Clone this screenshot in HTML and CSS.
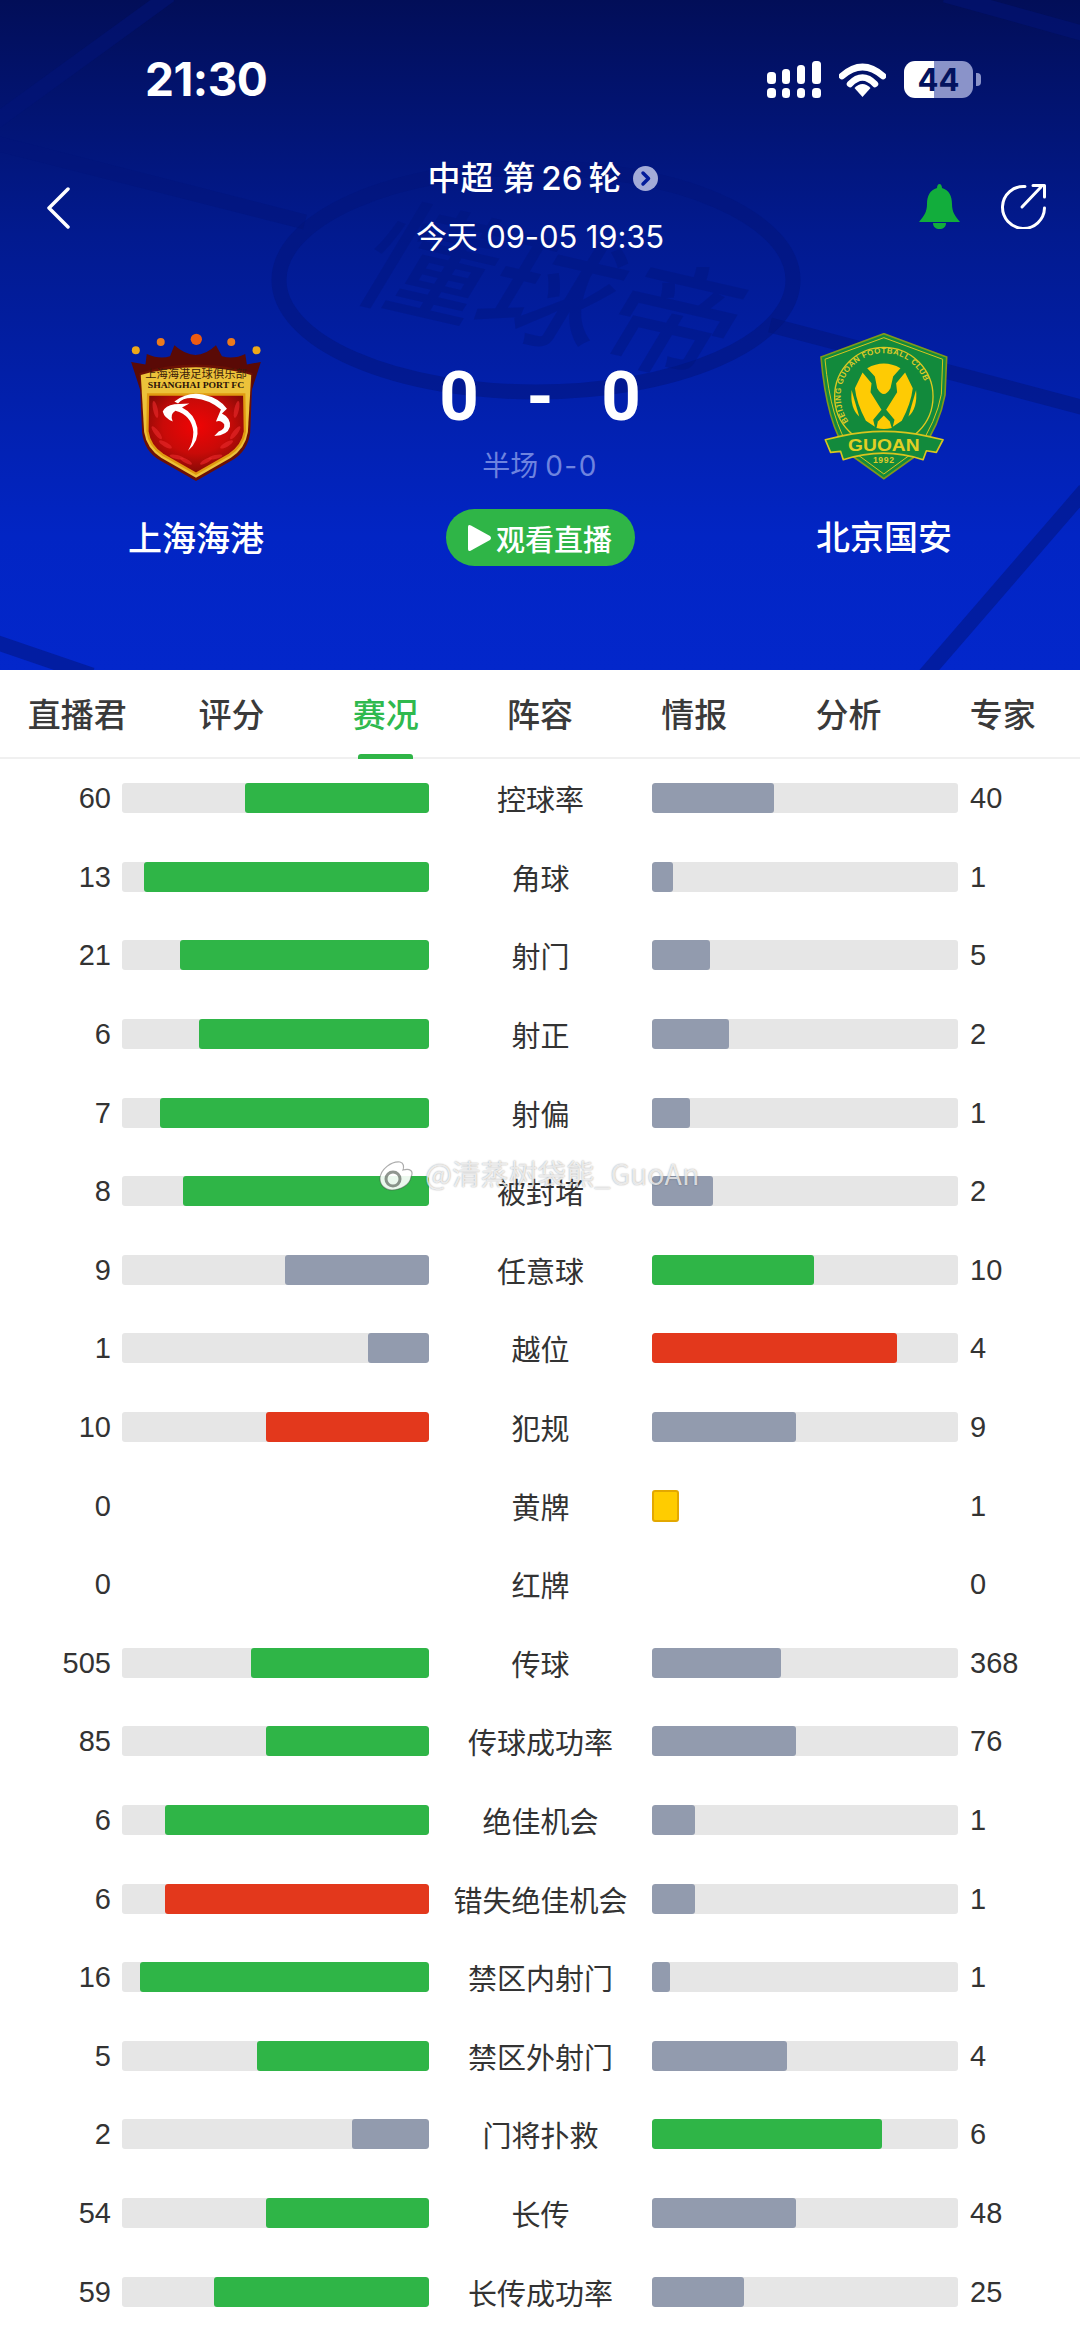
FILE: index.html
```html
<!DOCTYPE html>
<html lang="zh">
<head>
<meta charset="utf-8">
<title>上海海港 vs 北京国安</title>
<link rel="stylesheet" href="styles.css">
</head>
<body>
<header class="hero">
  <svg class="pitch" viewBox="0 0 1080 670" aria-hidden="true">
    <path class="pitch-line" d="M170 -5 L-5 122"/>
    <path class="pitch-line" d="M945 -5 L1085 34"/>
    <path class="pitch-line" d="M-5 143 L305 222"/>
    <path class="pitch-line" d="M770 325 L1085 408"/>
    <path class="pitch-line" d="M-5 642 L92 675"/>
    <path class="pitch-line" d="M1085 490 L925 675"/>
    <ellipse class="pitch-line" cx="536" cy="280" rx="257" ry="112"/>
    <text class="pitch-word" transform="translate(345 292) rotate(13) skewX(-18)">懂球帝</text>
  </svg>

  <div class="status">
    <span class="clock">21:30</span>
    <div class="status-icons">
      <svg class="signal" viewBox="0 0 54 37">
        <rect x="0" y="27" width="9" height="10" rx="3.5"/><rect x="15" y="27" width="8" height="10" rx="3.5"/><rect x="30" y="27" width="8" height="10" rx="3.5"/><rect x="45" y="27" width="9" height="10" rx="3.5"/>
        <rect x="0" y="11" width="9" height="12" rx="3.5"/><rect x="15" y="8" width="8" height="15" rx="3.5"/><rect x="30" y="4" width="8" height="19" rx="3.5"/><rect x="45" y="0" width="9" height="23" rx="3.5"/>
      </svg>
      <svg class="wifi" viewBox="0 0 47 34">
        <path class="wifi-arc" d="M3 13 Q23.500 -5 44 13"/>
        <path class="wifi-arc" d="M11 21 Q23.500 8 36 21"/>
        <path class="wifi-dot" d="M15.500 25 Q23.500 17 31.500 25 L23.500 34 Z"/>
      </svg>
      <div class="battery"><span class="battery-level">44</span></div>
    </div>
  </div>

  <div class="nav">
    <svg class="back" viewBox="0 0 24 42"><path d="M22 2 L3 21 L22 40"/></svg>
    <div class="nav-title">
      <div class="round"><span>中超 第<span class="round-num">26</span>轮</span><svg class="round-more" viewBox="0 0 25 25"><circle cx="12.500" cy="12.500" r="12.500"/><path d="M10 7 L15.500 12.500 L10 18"/></svg></div>
      <div class="date">今天 09-05 19:35</div>
    </div>
    <div class="nav-actions">
      <svg class="bell" viewBox="0 0 41 45"><path d="M20.500 0 C22 0 23 2 23 4 C30 6 33 12 33 20 C33 28 36 32 41 38 L0 38 C5 32 8 28 8 20 C8 12 11 6 18 4 C18 2 19 0 20.500 0 Z"/><path d="M14 39 L27 39 C27 43 24 45 20.500 45 C17 45 14 43 14 39 Z"/></svg>
      <svg class="share" viewBox="0 0 45 45"><path d="M24 2.500 A21 21 0 1 0 43.500 24"/><path d="M21 23 L40 3"/><path d="M32 1.500 L43.500 1.500 L43.500 13"/></svg>
    </div>
  </div>

  <div class="match">
    <div class="team">
      <svg class="crest" viewBox="215 70 390 445">
        <defs>
          <radialGradient id="redfill" cx="50%" cy="40%" r="62%"><stop offset="0" stop-color="#f00404"/><stop offset=".55" stop-color="#c90a08"/><stop offset="1" stop-color="#7c0b06"/></radialGradient>
        </defs>
        <circle class="dot-a" cx="229" cy="122" r="12"/><circle class="dot-b" cx="304" cy="97" r="12"/><circle class="dot-c" cx="411" cy="89" r="17"/><circle class="dot-b" cx="516" cy="97" r="12"/><circle class="dot-a" cx="592" cy="122" r="12"/>
        <path class="crown" d="M215 157 L258 165 L262 133 Q300 150 332 140 L345 107 Q410 165 470 107 L488 140 Q525 150 558 133 L563 165 L605 157 L575 250 L245 250 Z"/>
        <path class="shield-edge" d="M240 190 Q410 140 580 190 L573 370 Q565 425 520 452 L410 515 L300 452 Q255 425 248 370 Z"/>
        <path class="shield-gold" d="M244 196 Q410 150 576 196 L566 368 Q558 418 515 445 L410 505 L305 445 Q262 418 254 368 Z"/>
        <path class="shield-red" d="M266 255 L555 255 L557 366 Q550 410 510 436 L410 493 L310 436 Q270 410 264 366 Z"/>
        <g class="wings">
          <ellipse cx="288" cy="300" rx="7" ry="26" transform="rotate(-12 288 300)"/><ellipse cx="292" cy="370" rx="7" ry="24" transform="rotate(-38 292 370)"/><ellipse cx="318" cy="405" rx="7" ry="22" transform="rotate(-60 318 405)"/><ellipse cx="352" cy="443" rx="6" ry="22" transform="rotate(-78 352 443)"/><ellipse cx="380" cy="455" rx="6" ry="20" transform="rotate(-62 380 455)"/>
          <ellipse cx="532" cy="300" rx="7" ry="26" transform="rotate(12 532 300)"/><ellipse cx="528" cy="370" rx="7" ry="24" transform="rotate(38 528 370)"/><ellipse cx="502" cy="405" rx="7" ry="22" transform="rotate(60 502 405)"/><ellipse cx="468" cy="443" rx="6" ry="22" transform="rotate(78 468 443)"/><ellipse cx="440" cy="455" rx="6" ry="20" transform="rotate(62 440 455)"/>
        </g>
        <path class="eagle" d="M345 276 Q385 246 430 255 Q480 265 503 298 L488 312 Q515 325 512 352 Q505 378 465 380 L478 366 Q497 360 495 345 Q486 330 470 336 L485 300 Q450 270 405 266 Q372 263 356 282 Z"/>
        <path class="eagle" d="M390 282 L345 284 Q318 288 310 306 Q315 326 340 336 Q330 316 348 304 Q398 318 402 368 Q402 398 386 424 Q420 396 414 355 Q405 312 368 294 Z"/>
        <text class="crest-cn" x="410" y="205" textLength="305" lengthAdjust="spacingAndGlyphs">上海海港足球俱乐部</text>
        <text class="crest-en" x="410" y="236" textLength="290" lengthAdjust="spacingAndGlyphs">SHANGHAI PORT FC</text>
      </svg>
      <div class="team-name">上海海港</div>
    </div>

    <div class="score-box">
      <div class="score"><span>0</span><span class="dash">-</span><span>0</span></div>
      <div class="half">半场<span class="half-num">0-0</span></div>
      <div class="watch"><svg class="play" viewBox="0 0 23 26"><path d="M0 2 Q0 -1 3 .5 L22 11 Q24 13 22 15 L3 25.500 Q0 27 0 24 Z"/></svg>观看直播</div>
    </div>

    <div class="team">
      <svg class="crest crest-guoan" viewBox="180 75 385 440">
        <defs><path id="ringtext" d="M266 340 A130 130 0 1 1 478 340"/></defs>
        <path class="ga-shield" d="M372 76 L561 146 L556 260 Q540 350 480 435 L372 512 L265 435 Q200 350 183 146 Z"/>
        <path class="ga-inner" d="M372 88 L549 153 L545 258 Q530 340 472 425 L372 498 L273 425 Q212 340 195 153 Z"/>
        <circle class="ga-ring" cx="372" cy="265" r="148"/>
        <path class="ga-ball" d="M322 180 Q372 152 422 180 L400 205 L392 240 Q372 275 352 240 L345 205 Z"/>
        <path class="ga-ball" d="M308 193 L335 225 L332 252 L365 305 L340 335 L345 356 L318 338 Q290 285 285 240 Z"/>
        <path class="ga-ball" d="M436 193 L409 225 L412 252 L379 305 L404 335 L399 356 L426 338 Q454 285 459 240 Z"/>
        <path class="ga-ball" d="M275 245 L298 325 Q270 300 275 245 Z"/>
        <path class="ga-ball" d="M469 245 L446 325 Q474 300 469 245 Z"/>
        <path class="ga-ball" d="M372 322 L390 340 L396 360 Q372 366 350 360 L354 340 Z"/>
        <text class="ga-ringtext"><textPath href="#ringtext">BEIJING GUOAN FOOTBALL CLUB</textPath></text>
        <path class="ga-ribbon" d="M196 395 L240 385 Q372 355 505 385 L550 395 L530 433 L500 428 L490 455 Q372 415 250 455 L242 430 L212 433 Z"/>
        <text class="ga-name" x="372" y="428" textLength="215" lengthAdjust="spacingAndGlyphs">GUOAN</text>
        <text class="ga-year" x="372" y="466">1992</text>
      </svg>
      <div class="team-name">北京国安</div>
    </div>
  </div>
</header>

<nav class="tabs">
  <span class="tab">直播君</span>
  <span class="tab">评分</span>
  <span class="tab active">赛况</span>
  <span class="tab">阵容</span>
  <span class="tab">情报</span>
  <span class="tab">分析</span>
  <span class="tab">专家</span>
</nav>

<main class="stats">
  <div class="row"><span class="val-l">60</span><div class="bar bar-l"><i class="fill win" style="width:60%"></i></div><span class="label">控球率</span><div class="bar"><i class="fill lose" style="width:40%"></i></div><span class="val-r">40</span></div>
  <div class="row"><span class="val-l">13</span><div class="bar bar-l"><i class="fill win" style="width:93%"></i></div><span class="label">角球</span><div class="bar"><i class="fill lose" style="width:7%"></i></div><span class="val-r">1</span></div>
  <div class="row"><span class="val-l">21</span><div class="bar bar-l"><i class="fill win" style="width:81%"></i></div><span class="label">射门</span><div class="bar"><i class="fill lose" style="width:19%"></i></div><span class="val-r">5</span></div>
  <div class="row"><span class="val-l">6</span><div class="bar bar-l"><i class="fill win" style="width:75%"></i></div><span class="label">射正</span><div class="bar"><i class="fill lose" style="width:25%"></i></div><span class="val-r">2</span></div>
  <div class="row"><span class="val-l">7</span><div class="bar bar-l"><i class="fill win" style="width:87.500%"></i></div><span class="label">射偏</span><div class="bar"><i class="fill lose" style="width:12.500%"></i></div><span class="val-r">1</span></div>
  <div class="row"><span class="val-l">8</span><div class="bar bar-l"><i class="fill win" style="width:80%"></i></div><span class="label">被封堵</span><div class="bar"><i class="fill lose" style="width:20%"></i></div><span class="val-r">2</span></div>
  <div class="row"><span class="val-l">9</span><div class="bar bar-l"><i class="fill lose" style="width:47%"></i></div><span class="label">任意球</span><div class="bar"><i class="fill win" style="width:53%"></i></div><span class="val-r">10</span></div>
  <div class="row"><span class="val-l">1</span><div class="bar bar-l"><i class="fill lose" style="width:20%"></i></div><span class="label">越位</span><div class="bar"><i class="fill alert" style="width:80%"></i></div><span class="val-r">4</span></div>
  <div class="row"><span class="val-l">10</span><div class="bar bar-l"><i class="fill alert" style="width:53%"></i></div><span class="label">犯规</span><div class="bar"><i class="fill lose" style="width:47%"></i></div><span class="val-r">9</span></div>
  <div class="row"><span class="val-l">0</span><div class="empty"></div><span class="label">黄牌</span><div class="empty"><i class="card"></i></div><span class="val-r">1</span></div>
  <div class="row"><span class="val-l">0</span><div class="empty"></div><span class="label">红牌</span><div class="empty"></div><span class="val-r">0</span></div>
  <div class="row"><span class="val-l">505</span><div class="bar bar-l"><i class="fill win" style="width:58%"></i></div><span class="label">传球</span><div class="bar"><i class="fill lose" style="width:42%"></i></div><span class="val-r">368</span></div>
  <div class="row"><span class="val-l">85</span><div class="bar bar-l"><i class="fill win" style="width:53%"></i></div><span class="label">传球成功率</span><div class="bar"><i class="fill lose" style="width:47%"></i></div><span class="val-r">76</span></div>
  <div class="row"><span class="val-l">6</span><div class="bar bar-l"><i class="fill win" style="width:86%"></i></div><span class="label">绝佳机会</span><div class="bar"><i class="fill lose" style="width:14%"></i></div><span class="val-r">1</span></div>
  <div class="row"><span class="val-l">6</span><div class="bar bar-l"><i class="fill alert" style="width:86%"></i></div><span class="label">错失绝佳机会</span><div class="bar"><i class="fill lose" style="width:14%"></i></div><span class="val-r">1</span></div>
  <div class="row"><span class="val-l">16</span><div class="bar bar-l"><i class="fill win" style="width:94%"></i></div><span class="label">禁区内射门</span><div class="bar"><i class="fill lose" style="width:6%"></i></div><span class="val-r">1</span></div>
  <div class="row"><span class="val-l">5</span><div class="bar bar-l"><i class="fill win" style="width:56%"></i></div><span class="label">禁区外射门</span><div class="bar"><i class="fill lose" style="width:44%"></i></div><span class="val-r">4</span></div>
  <div class="row"><span class="val-l">2</span><div class="bar bar-l"><i class="fill lose" style="width:25%"></i></div><span class="label">门将扑救</span><div class="bar"><i class="fill win" style="width:75%"></i></div><span class="val-r">6</span></div>
  <div class="row"><span class="val-l">54</span><div class="bar bar-l"><i class="fill win" style="width:53%"></i></div><span class="label">长传</span><div class="bar"><i class="fill lose" style="width:47%"></i></div><span class="val-r">48</span></div>
  <div class="row"><span class="val-l">59</span><div class="bar bar-l"><i class="fill win" style="width:70%"></i></div><span class="label">长传成功率</span><div class="bar"><i class="fill lose" style="width:30%"></i></div><span class="val-r">25</span></div>
</main>

<div class="stamp">
  <svg class="stamp-logo" viewBox="0 0 42 36">
    <path class="stamp-eye" d="M2 24 C2 14 14 6 22 7 C26 8 26 12 25 15 C32 13 36 16 33 22 C32 30 22 35 14 35 C7 35 2 30 2 24 Z"/>
    <circle class="stamp-pupil" cx="15" cy="24" r="7"/>
    <path class="stamp-wave" d="M28 9 Q35 8 35 15 M28 2 Q41 1 40 15"/>
  </svg>
  <span>@清蒸树袋熊_GuoAn</span>
</div>
</body>
</html>
```

FILE: styles.css
```css
* { box-sizing: border-box; }
html, body { margin: 0; padding: 0; }
body {
  position: relative;
  width: 1080px;
  height: 2347px;
  overflow: hidden;
  background: #fff;
  color: #333;
  font-family: "Noto Sans CJK SC", "Liberation Sans", sans-serif;
}

/* Hero */
.hero {
  position: relative;
  display: flow-root;
  height: 670px;
  overflow: hidden;
  color: #fff;
  background: linear-gradient(180deg, #020e58 0%, #021a8f 35%, #0225c4 80%, #0327cb 100%);
}
.pitch { position: absolute; inset: 0; width: 1080px; height: 670px; }
.pitch-line { fill: none; stroke: #01137a; stroke-opacity: .5; stroke-width: 15; }
.pitch-word { font-size: 125px; font-weight: 500; fill: #01137a; fill-opacity: .4; font-family: "Noto Sans CJK SC", sans-serif; }

.status {
  position: relative;
  display: flex;
  justify-content: space-between;
  align-items: center;
  height: 37px;
  margin-top: 61px;
  padding: 0 107px 0 145px;
}
.clock { font: 700 46px/37px Inter, "Liberation Sans", sans-serif; letter-spacing: -.5px; }
.status-icons { display: flex; align-items: center; gap: 18px; }
.signal { width: 54px; height: 37px; fill: #fff; }
.wifi { width: 47px; height: 34px; }
.wifi-arc { fill: none; stroke: #fff; stroke-width: 6.500; stroke-linecap: round; }
.wifi-dot { fill: #fff; }
.battery {
  position: relative;
  width: 69px;
  height: 37px;
  border-radius: 11px;
  background: linear-gradient(90deg, #fff 0 30px, #8a93c9 30px 100%);
  color: #03135e;
  text-align: center;
  font: 700 31px/37px Inter, "Liberation Sans", sans-serif;
}
.battery::after {
  content: "";
  position: absolute;
  left: 72px;
  top: 12px;
  width: 5px;
  height: 13px;
  border-radius: 0 4px 4px 0;
  background: #8a93c9;
}

.nav {
  position: relative;
  display: grid;
  grid-template-columns: 1fr 300px 1fr;
  align-items: start;
  height: 100px;
  margin-top: 63px;
}
.back { width: 24px; height: 42px; margin: 26px 0 0 46px; fill: none; stroke: #fff; stroke-width: 3.500; stroke-linecap: round; stroke-linejoin: round; }
.nav-title { text-align: center; }
.round {
  display: flex;
  justify-content: center;
  align-items: center;
  gap: 12px;
  height: 34px;
  margin-left: 6px;
  font: 500 33px/34px Inter, "Noto Sans CJK SC", sans-serif;
  white-space: nowrap;
}
.round-num { margin: 0 6px; }
.round-more { width: 25px; height: 25px; fill: #a3abd8; flex: none; }
.round-more path { fill: none; stroke: #031c9a; stroke-width: 3.500; stroke-linecap: round; stroke-linejoin: round; }
.date { margin-top: 25px; font: 400 31px/34px Inter, "Noto Sans CJK SC", sans-serif; letter-spacing: -.1px; white-space: nowrap; }
.nav-actions { display: flex; justify-content: flex-end; align-items: flex-start; gap: 41px; padding: 23px 34px 0 0; }
.bell { width: 41px; height: 45px; fill: #12ad3c; }
.share { width: 45px; height: 45px; fill: none; stroke: #fff; stroke-width: 3; stroke-linecap: round; stroke-linejoin: round; }

.match {
  position: relative;
  display: grid;
  grid-template-columns: 392px 296px 392px;
  margin-top: 72px;
}
.team { display: flex; flex-direction: column; align-items: center; }
.crest { width: 130px; height: 148px; }
.crest-guoan { width: 128px; height: 147px; }
.team-name { margin-top: 32px; font-size: 34px; line-height: 48px; font-weight: 500; }

.dot-a { fill: #eda81a; } .dot-b { fill: #ec7a1c; } .dot-c { fill: #ec5a12; }
.crown { fill: #5a0a06; }
.shield-edge { fill: #6b1005; }
.shield-gold { fill: #ecc23a; }
.shield-red { fill: url(#redfill); stroke: #e09a10; stroke-width: 7; }
.wings { fill: #e8282a; fill-opacity: .65; }
.eagle { fill: #fff; }
.crest-cn { font-size: 34px; fill: #3b1a08; text-anchor: middle; font-family: "Noto Sans CJK SC", sans-serif; }
.crest-en { font-size: 26px; fill: #2a1208; text-anchor: middle; font-weight: 700; font-family: "Liberation Serif", serif; }

.ga-shield { fill: #128a3c; stroke: #7f9a1a; stroke-width: 5; }
.ga-inner { fill: none; stroke: #d8c51e; stroke-width: 3; }
.ga-ring { fill: none; stroke: #dcc820; stroke-width: 4; }
.ga-ball { fill: #fecb04; }
.ga-ringtext { font: 700 24px "Liberation Sans", sans-serif; fill: #dccb2a; letter-spacing: 1.500px; }
.ga-ribbon { fill: #128a3c; stroke: #d8c51e; stroke-width: 5; stroke-linejoin: round; }
.ga-name { font: 700 52px "Liberation Sans", sans-serif; fill: #e2cf24; text-anchor: middle; }
.ga-year { font: 700 26px "Liberation Sans", sans-serif; fill: #dccb2a; text-anchor: middle; letter-spacing: 2px; }

.score-box { display: flex; flex-direction: column; align-items: center; }
.score {
  display: grid;
  grid-template-columns: 40px 1fr 40px;
  width: 202px;
  height: 72px;
  margin-top: 28px;
  text-align: center;
  font: 700 69px/72px Roboto, "Liberation Sans", sans-serif;
}
.half { margin-top: 13px; font-size: 28px; line-height: 36px; color: #6e83df; }
.half-num { margin-left: 7px; font-family: Inter, sans-serif; letter-spacing: 1.500px; }
.watch {
  display: flex;
  align-items: center;
  justify-content: center;
  gap: 5px;
  width: 189px;
  height: 57px;
  margin-top: 25px;
  border-radius: 29px;
  background: #2fb547;
  font-size: 29px;
  font-weight: 500;
}
.play { width: 23px; height: 26px; fill: #fff; }

/* Tabs */
.tabs {
  display: grid;
  grid-template-columns: repeat(7, 1fr);
  height: 89px;
  border-bottom: 2px solid #f0f0f0;
}
.tab {
  position: relative;
  text-align: center;
  font-size: 33px;
  font-weight: 500;
  line-height: 86px;
  color: #3a3a3a;
}
.tab.active { color: #2fb94e; }
.tab.active::after {
  content: "";
  position: absolute;
  left: 50%;
  bottom: -2px;
  width: 55px;
  height: 5px;
  margin-left: -27.500px;
  border-radius: 3px 3px 0 0;
  background: #2fb547;
}

/* Stats */
.row {
  display: grid;
  grid-template-columns: 111px 318px 223px 306px 1fr;
  align-items: center;
  height: 78.600px;
}
.val-l, .val-r { font: 400 29px/36px "Liberation Sans", sans-serif; color: #333; }
.val-l { text-align: right; }
.val-r { margin-left: 12px; }
.bar, .empty { display: flex; height: 30px; }
.bar { background: #e6e6e6; border-radius: 3px; overflow: hidden; }
.bar-l { justify-content: flex-end; margin-left: 11px; }
.label { text-align: center; font-size: 29px; line-height: 36px; color: #333; }
.fill { display: block; height: 100%; border-radius: 3px; }
.win { background: #2fb547; }
.lose { background: #929bae; }
.alert { background: #e3381c; }
.card {
  display: block;
  width: 27px;
  height: 32px;
  margin-top: -1px;
  border: 2px solid #e3a800;
  border-radius: 3px;
  background: #ffcc00;
}

/* Repost stamp */
.stamp {
  position: absolute;
  left: 378px;
  top: 1155px;
  display: flex;
  align-items: center;
  gap: 5px;
  height: 36px;
  font: 400 28.500px/36px "Noto Sans CJK SC", "Liberation Sans", sans-serif;
  color: rgba(255, 255, 255, .75);
  text-shadow: 0 0 1.500px rgba(0, 0, 0, .4);
}
.stamp-logo { width: 42px; height: 36px; }
.stamp-eye { fill: rgba(255, 255, 255, .9); stroke: rgba(70, 70, 70, .45); stroke-width: 1.200; }
.stamp-pupil { fill: none; stroke: rgba(70, 80, 70, .6); stroke-width: 3; }
.stamp-wave { fill: none; stroke: rgba(255, 255, 255, .9); stroke-width: 3; }
```
